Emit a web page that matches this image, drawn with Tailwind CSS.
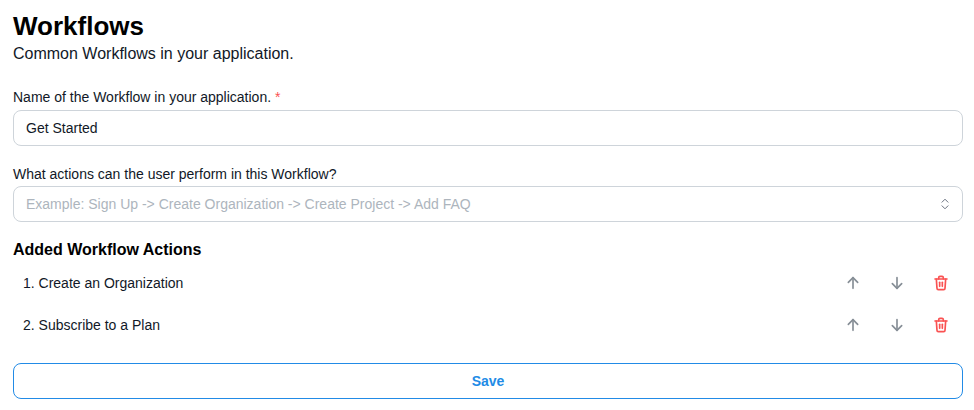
<!DOCTYPE html>
<html lang="en">
<head>
    <meta charset="UTF-8">
    <title>Workflows</title>
    <script src="https://cdn.jsdelivr.net/npm/@tailwindcss/browser@4"></script>
</head>
<body class="bg-white text-black font-['Liberation_Sans',sans-serif]">
    <div class="pl-[13px] pr-[11px] pt-[10px]">
        <!-- Header -->
        <h1 class="text-[26px] leading-[32px] font-bold">Workflows</h1>
        <p class="text-base leading-[24px] text-[#111827]">Common Workflows in your application.</p>

        <!-- Name -->
        <label class="block mt-[21px] text-sm leading-[20px] text-[#111827]">Name of the Workflow in your application. <span class="text-[#fa5252]">*</span></label>
        <div class="mt-[3px] h-[36px] flex items-center px-[12px] border border-[#ced4da] rounded-lg text-sm text-[#111827]">Get Started</div>

        <!-- Actions select -->
        <label class="block mt-[18px] text-sm leading-[20px] text-[#111827]">What actions can the user perform in this Workflow?</label>
        <div class="mt-[2px] h-[36px] flex items-center justify-between pl-[12px] pr-[13px] border border-[#ced4da] rounded-lg text-sm text-[#adb5bd]">
            <span>Example: Sign Up -&gt; Create Organization -&gt; Create Project -&gt; Add FAQ</span>
            <svg class="w-[8px] h-[12px] text-[#6b7280]" viewBox="0 0 8 12" fill="none" stroke="currentColor" stroke-width="1" stroke-linecap="round" stroke-linejoin="round"><path d="M1 4.2 4 1.2l3 3"/><path d="M1 7.8l3 3 3-3"/></svg>
        </div>

        <!-- Added actions -->
        <h2 class="mt-[18px] text-base leading-[20px] font-bold">Added Workflow Actions</h2>
        <div class="mt-[2px]">
            <div class="h-[42px] flex items-center justify-between pl-[10px] pr-[14px] text-sm text-[#111827]">
                <span>1. Create an Organization</span>
                <div class="flex items-center gap-[28px]">
                    <svg class="w-4 h-4 text-[#868e96]" viewBox="0 0 24 24" fill="none" stroke="currentColor" stroke-width="2.5" stroke-linecap="round" stroke-linejoin="round"><path d="M12 20V4"/><path d="M5 11l7-7 7 7"/></svg>
                    <svg class="w-4 h-4 text-[#868e96]" viewBox="0 0 24 24" fill="none" stroke="currentColor" stroke-width="2.5" stroke-linecap="round" stroke-linejoin="round"><path d="M12 4v16"/><path d="M5 13l7 7 7-7"/></svg>
                    <svg class="w-4 h-4 text-[#fa5252]" viewBox="0 0 24 24" fill="none" stroke="currentColor" stroke-width="2.5" stroke-linecap="round" stroke-linejoin="round"><path d="M3 6h18"/><path d="M5 6l1 14a2 2 0 0 0 2 2h8a2 2 0 0 0 2-2l1-14"/><path d="M8.5 6V4a2 2 0 0 1 2-2h3a2 2 0 0 1 2 2v2"/><path d="M10 11v6"/><path d="M14 11v6"/></svg>
                </div>
            </div>
            <div class="h-[42px] flex items-center justify-between pl-[10px] pr-[14px] text-sm text-[#111827]">
                <span>2. Subscribe to a Plan</span>
                <div class="flex items-center gap-[28px]">
                    <svg class="w-4 h-4 text-[#868e96]" viewBox="0 0 24 24" fill="none" stroke="currentColor" stroke-width="2.5" stroke-linecap="round" stroke-linejoin="round"><path d="M12 20V4"/><path d="M5 11l7-7 7 7"/></svg>
                    <svg class="w-4 h-4 text-[#868e96]" viewBox="0 0 24 24" fill="none" stroke="currentColor" stroke-width="2.5" stroke-linecap="round" stroke-linejoin="round"><path d="M12 4v16"/><path d="M5 13l7 7 7-7"/></svg>
                    <svg class="w-4 h-4 text-[#fa5252]" viewBox="0 0 24 24" fill="none" stroke="currentColor" stroke-width="2.5" stroke-linecap="round" stroke-linejoin="round"><path d="M3 6h18"/><path d="M5 6l1 14a2 2 0 0 0 2 2h8a2 2 0 0 0 2-2l1-14"/><path d="M8.5 6V4a2 2 0 0 1 2-2h3a2 2 0 0 1 2 2v2"/><path d="M10 11v6"/><path d="M14 11v6"/></svg>
                </div>
            </div>
        </div>

        <!-- Save -->
        <button class="mt-[17px] w-full h-[36px] border border-[#228be6] rounded-lg text-sm font-bold text-[#228be6]">Save</button>
    </div>
</body>
</html>
